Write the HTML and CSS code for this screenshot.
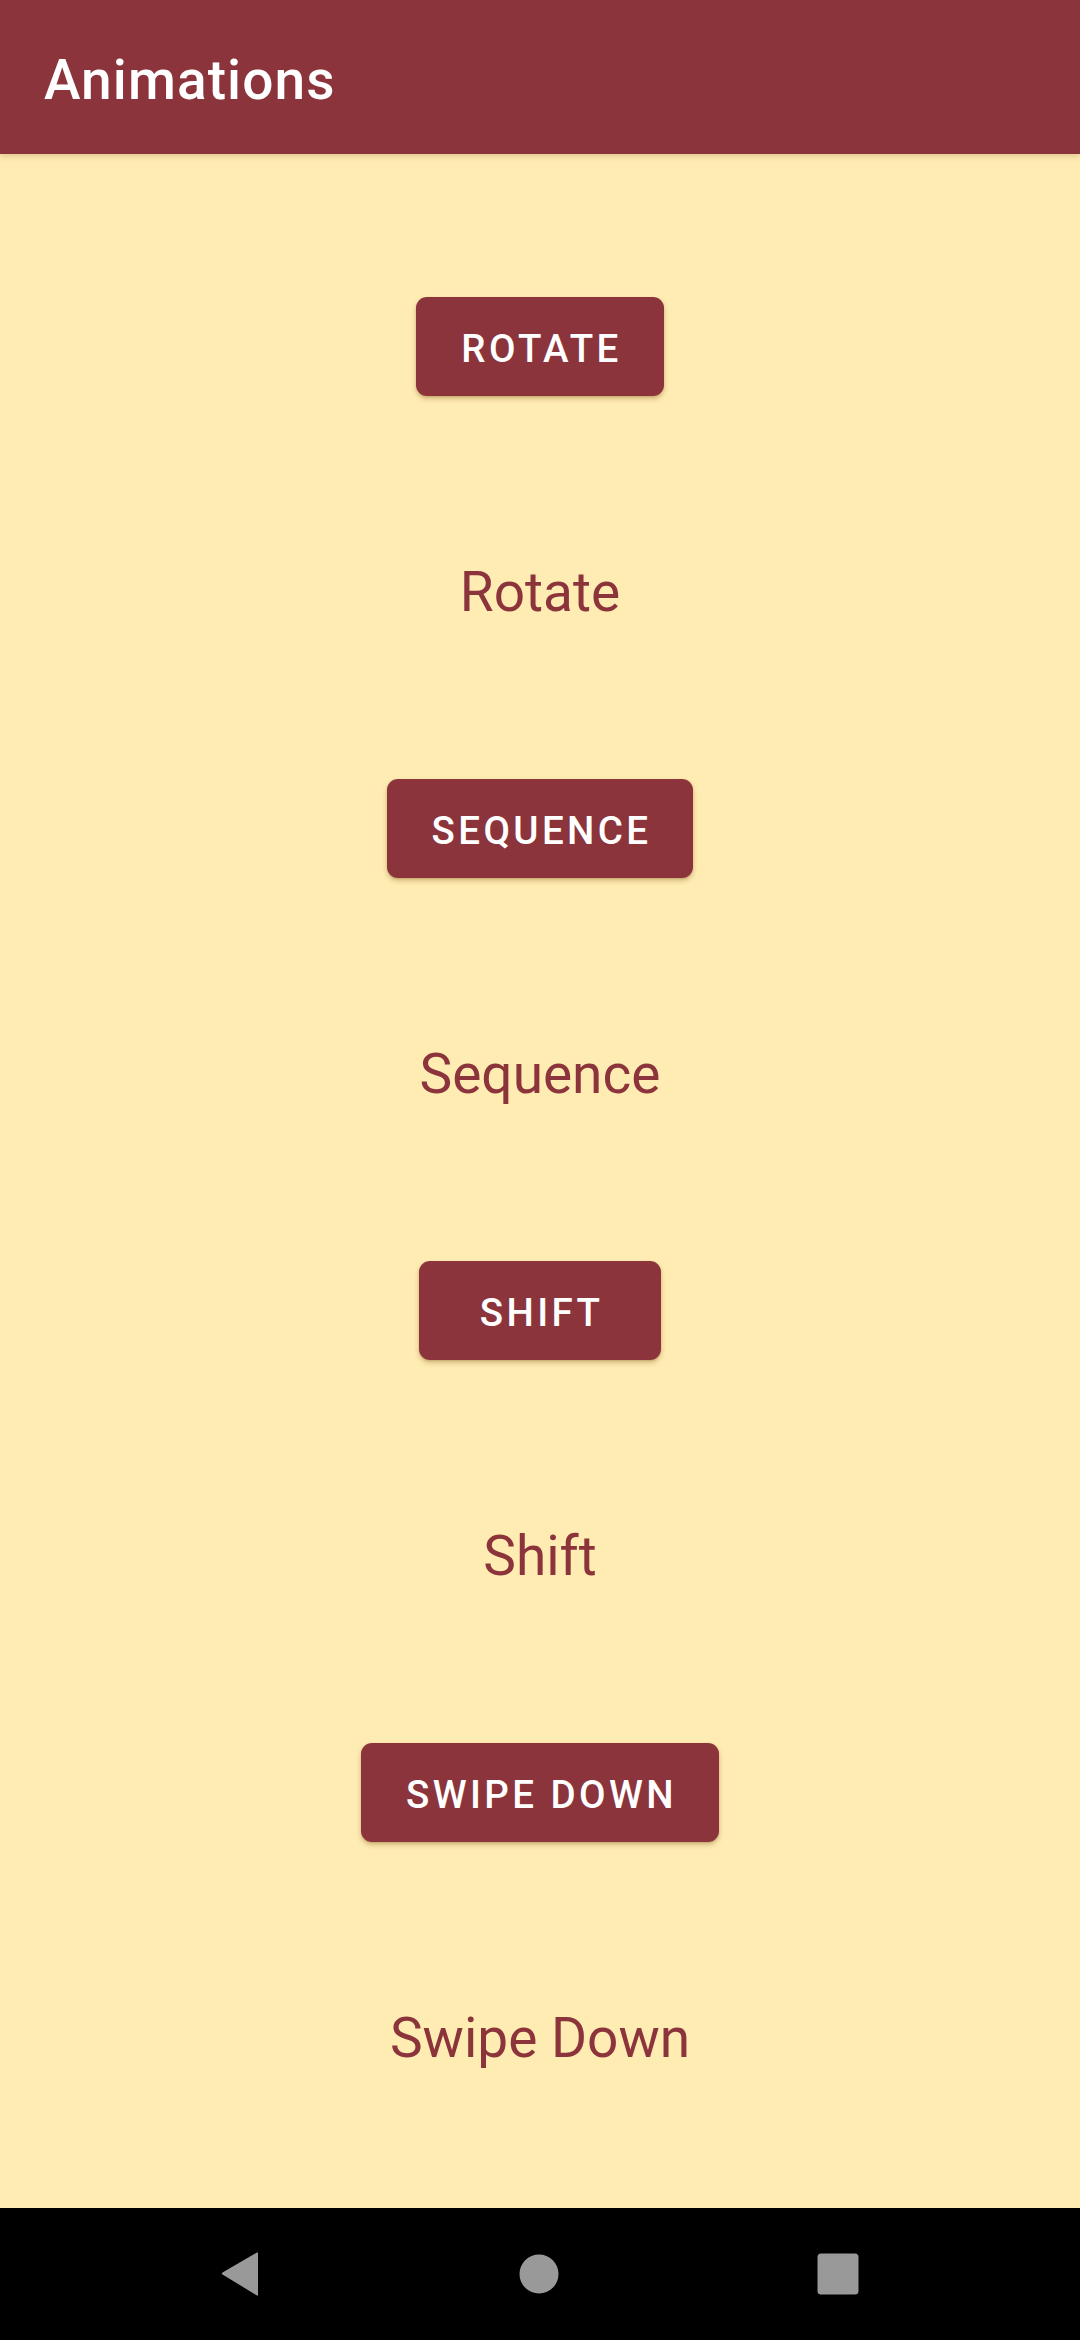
FILE: index.html
```html
<!DOCTYPE html>
<html>
<head>
<meta charset="utf-8">
<link rel="stylesheet" href="styles.css">
</head>
<body>
<div class="screen">
  <header class="appbar"><span class="title">Animations</span></header>
  <main class="content">
    <section class="group">
      <button class="btn">Rotate</button>
      <div class="label">Rotate</div>
    </section>
    <section class="group">
      <button class="btn">Sequence</button>
      <div class="label">Sequence</div>
    </section>
    <section class="group">
      <button class="btn">Shift</button>
      <div class="label">Shift</div>
    </section>
    <section class="group">
      <button class="btn">Swipe Down</button>
      <div class="label">Swipe Down</div>
    </section>
  </main>
  <nav class="navbar">
    <svg class="nav-icon" width="40" height="46" viewBox="0 0 40 46"><path d="M37 1.5 Q38 0.5 38 2.5 L38 43.5 Q38 45.5 37 44.5 L2.5 23.5 Q1 23 2.5 21.5 Z" fill="#999999"/></svg>
    <svg class="nav-icon" width="40" height="40" viewBox="0 0 40 40"><circle cx="20" cy="20" r="19.5" fill="#999999"/></svg>
    <svg class="nav-icon" width="42" height="42" viewBox="0 0 42 42"><rect x="0.5" y="0.5" width="41" height="41" rx="3.5" fill="#999999"/></svg>
  </nav>
</div>
</body>
</html>
```

FILE: styles.css
```css
html, body {
  margin: 0;
  padding: 0;
}
body {
  width: 1080px;
  height: 2340px;
  background: #FFECB3;
  font-family: Roboto, "Noto Sans", sans-serif;
  overflow: hidden;
}
.screen {
  display: flex;
  flex-direction: column;
  height: 2340px;
}
.appbar {
  position: relative;
  z-index: 2;
  box-sizing: border-box;
  height: 154px;
  flex: none;
  background: #8C343C;
  padding: 48px 0 0 44px;
  box-shadow: 0 2px 6px rgba(120, 80, 20, 0.25);
}
.title {
  display: block;
  color: #FFFFFF;
  font-size: 55px;
  font-weight: 500;
  line-height: 64px;
  letter-spacing: 1.1px;
}
.content {
  flex: 1 1 0;
  min-height: 0;
  overflow: hidden;
  display: flex;
  flex-direction: column;
  align-items: center;
  padding-top: 143px;
}
.group {
  display: flex;
  flex-direction: column;
  align-items: center;
  height: 482px;
  flex: none;
}
.btn {
  box-sizing: border-box;
  height: 99px;
  min-width: 242px;
  padding: 4px 42px 0 45px;
  border: none;
  border-radius: 11px;
  background: #8C343C;
  color: #FFFFFF;
  font-family: Roboto, "Noto Sans", sans-serif;
  font-size: 38.5px;
  font-weight: 500;
  letter-spacing: 3.4px;
  text-transform: uppercase;
  box-shadow: 0 3px 5px rgba(120, 80, 20, 0.3), 0 1px 2px rgba(120, 80, 20, 0.2);
}
.label {
  margin-top: 164px;
  color: #8C343C;
  font-size: 55px;
  line-height: 64px;
  font-weight: 400;
}
.navbar {
  flex: none;
  height: 132px;
  background: #000000;
  display: flex;
  align-items: center;
  justify-content: space-between;
  padding: 0 221px 0 220px;
  box-sizing: border-box;
}
.nav-icon {
  display: block;
}
```
